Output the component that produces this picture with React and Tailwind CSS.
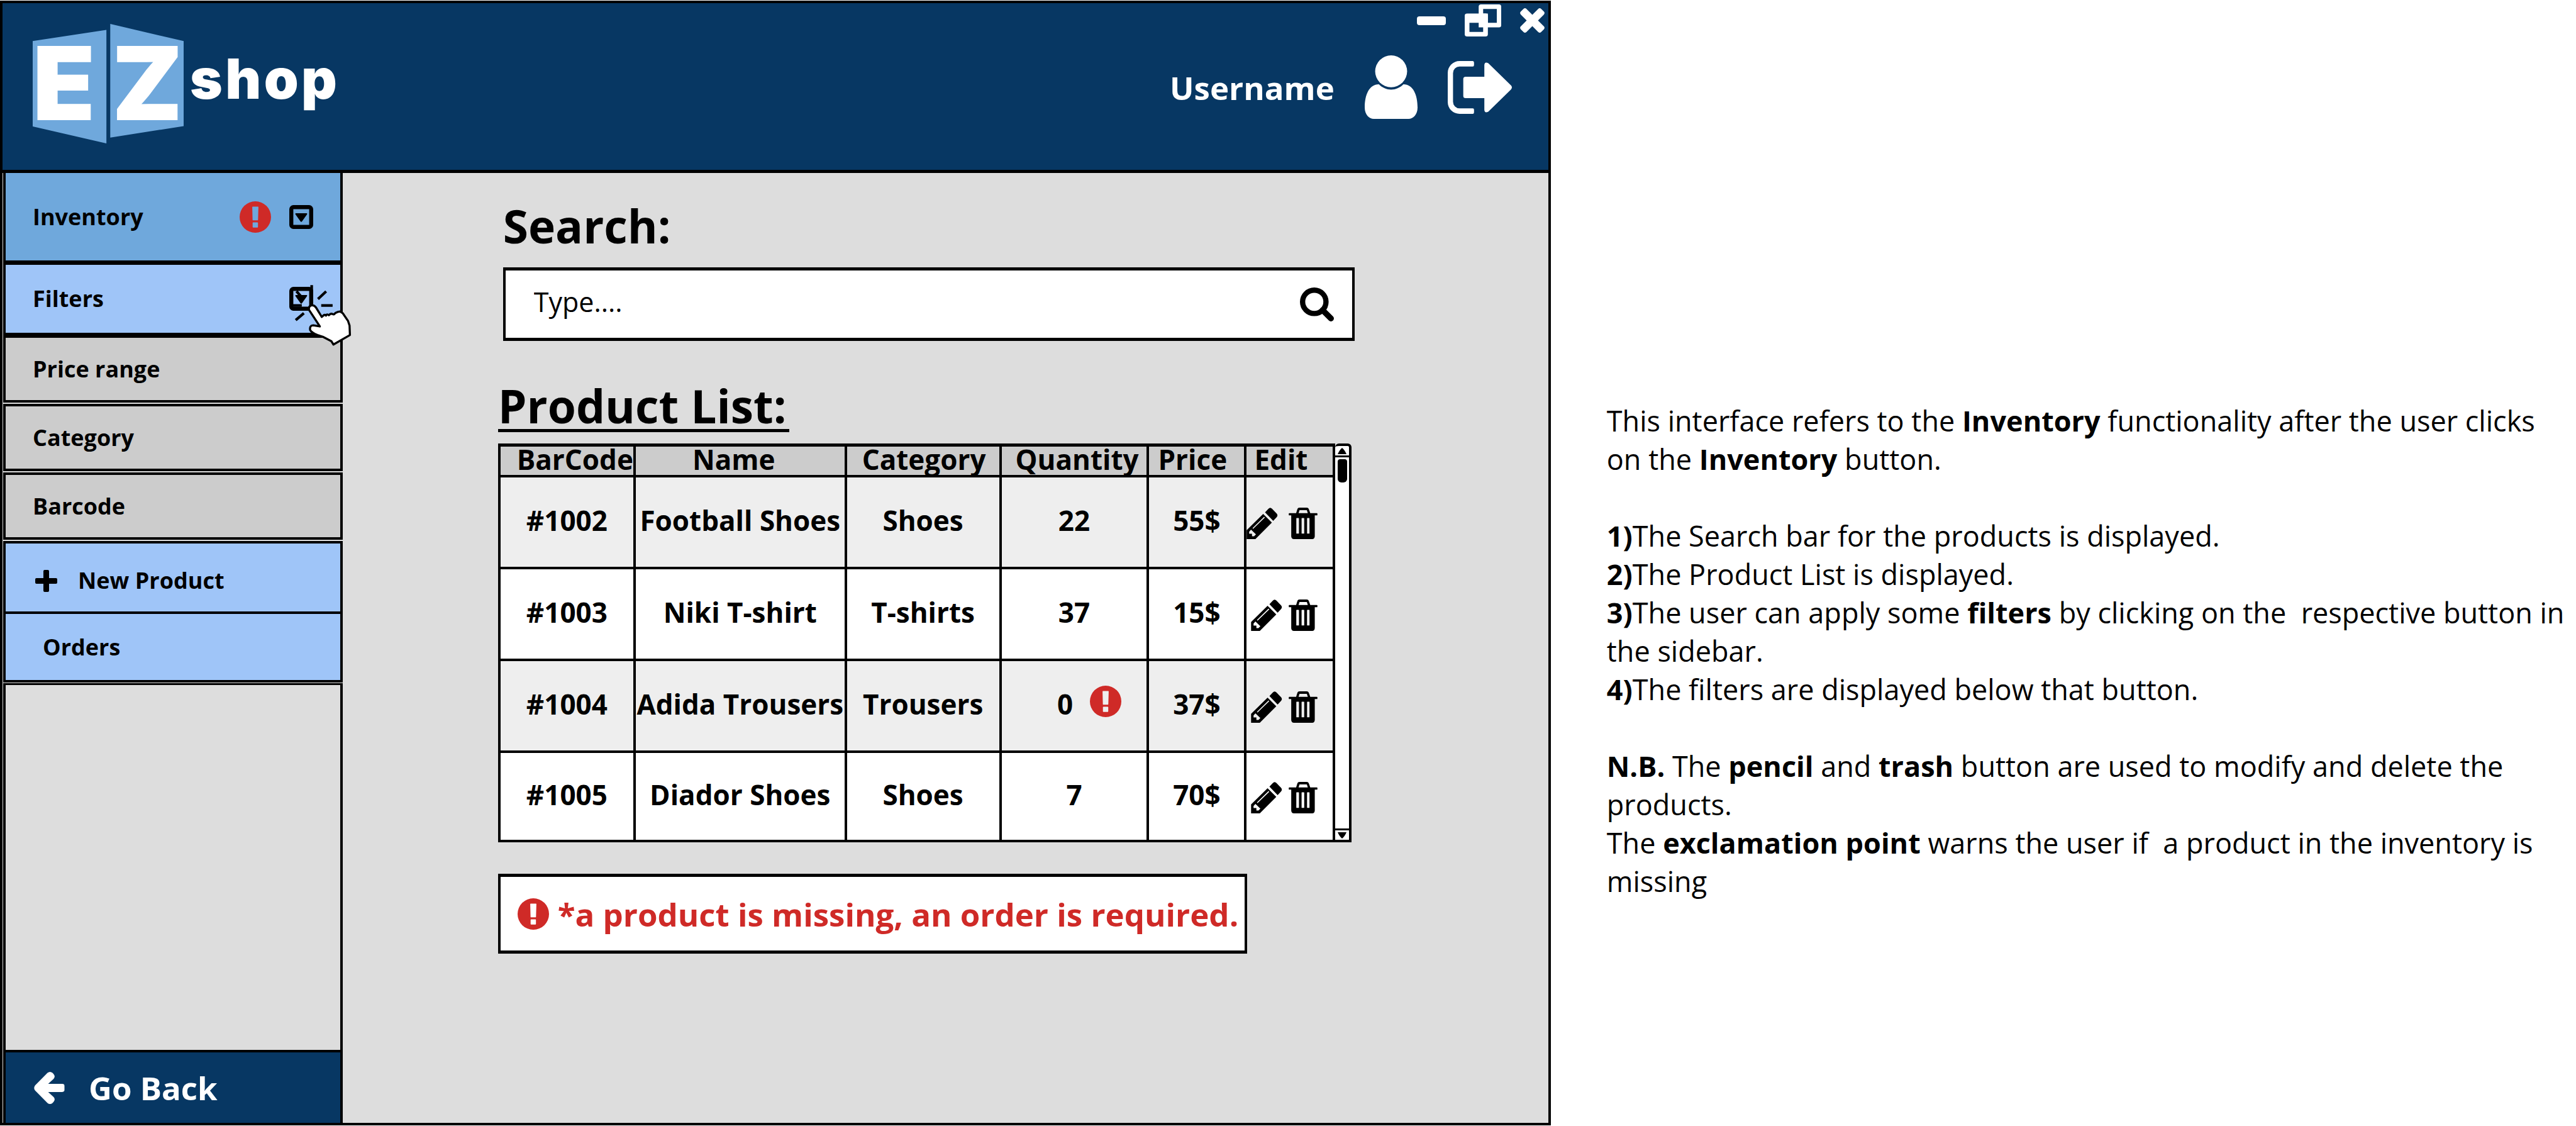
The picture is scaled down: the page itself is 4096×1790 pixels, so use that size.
import React from "react";

const products = [
  { code: "#1002", name: "Football Shoes", category: "Shoes", quantity: 22, price: "55$", missing: false },
  { code: "#1003", name: "Niki T-shirt", category: "T-shirts", quantity: 37, price: "15$", missing: false },
  { code: "#1004", name: "Adida Trousers", category: "Trousers", quantity: 0, price: "37$", missing: true },
  { code: "#1005", name: "Diador Shoes", category: "Shoes", quantity: 7, price: "70$", missing: false },
];

function AlertIcon() {
  return (
    <svg viewBox="0 0 50 50" className="size-[50px] shrink-0 text-[#cf2a27]" fill="currentColor" role="img" aria-label="Missing product">
      <path
        fillRule="evenodd"
        d="M25 0A25 25 0 1 1 25 50A25 25 0 1 1 25 0ZM20.8 8.4Q20.1 8.4 20.1 9.3L20.6 29.4Q20.6 30.3 21.6 30.3H28.3Q29.3 30.3 29.3 29.4L29.9 9.3Q29.9 8.4 29.2 8.4ZM21.6 33.4Q20.7 33.4 20.7 34.3V40.8Q20.7 41.7 21.6 41.7H28.3Q29.2 41.7 29.2 40.8V34.3Q29.2 33.4 28.3 33.4Z"
      />
    </svg>
  );
}

function CaretBox() {
  return (
    <svg viewBox="0 0 38 38" className="size-[38px] shrink-0" aria-hidden="true">
      <rect x="3.2" y="3.2" width="31.6" height="31.6" rx="3.4" fill="none" stroke="black" strokeWidth="6.4" />
      <path d="M10.4 13H27.6Q29 13.2 28.2 14.8L20.2 26Q19 27.4 17.8 26L9.8 14.8Q9 13.2 10.4 13Z" fill="black" />
    </svg>
  );
}

function PencilIcon() {
  return (
    <svg viewBox="39 44 164 166" className="size-[50px]" fill="black" aria-hidden="true">
      <path d="M136 69L154 50Q163 40 173 50L197 75Q206 85 197 95L179 114Z" />
      <path
        fillRule="evenodd"
        d="M126 77L172 123L85 210H39V163ZM131 92L70 152L73 156L135 96ZM62 160L52 171V182H67V195H78L88 185Z"
      />
    </svg>
  );
}

function TrashIcon() {
  return (
    <svg viewBox="261 43 152 167" className="h-[50px] w-[46px]" fill="black" aria-hidden="true">
      <path
        fillRule="evenodd"
        d="M264 72H300L307 50Q309 43 318 43H356Q365 43 367 50L375 72H410Q413 72 413 75V81Q413 84 410 84H399V194Q399 210 385 210H289Q274 210 274 194V84H264Q261 84 261 81V75Q261 72 264 72ZM313 72H362L357 56H318ZM303 98Q301 98 301 100V179Q301 181 303 181H313Q315 181 315 179V100Q315 98 313 98ZM331 98Q329 98 329 100V179Q329 181 331 181H341Q343 181 343 179V100Q343 98 341 98ZM360 98Q358 98 358 100V179Q358 181 360 181H369Q371 181 371 179V100Q371 98 369 98Z"
      />
    </svg>
  );
}

function Logo() {
  return (
    <svg viewBox="0 0 500 192" className="h-[192px] w-[500px] shrink-0" role="img" aria-label="EZ shop">
      <polygon points="0,27.3 117.2,9.4 117.2,190 0,163" fill="#6fa8dc" />
      <polygon points="123.3,0 240,27.3 240,162.5 123.3,180.7" fill="#6fa8dc" />
      <g className="font-['Inter',sans-serif] font-black" fill="white">
        <text x="0" y="152.5" fontSize="162">E</text>
        <text x="126" y="152.5" fontSize="162">Z</text>
        <text x="250" y="119.4" fontSize="88" className="tracking-wider">shop</text>
      </g>
    </svg>
  );
}

function WindowControls() {
  return (
    <div className="flex items-center gap-[30px]">
      <button type="button" aria-label="Minimize">
        <svg viewBox="0 0 46 14" className="h-[14px] w-[46px]"><rect width="46" height="14" rx="4" fill="white" /></svg>
      </button>
      <button type="button" aria-label="Restore">
        <svg viewBox="0 0 58 51" className="h-[51px] w-[58px]" fill="white">
          <path fillRule="evenodd" d="M26 0H54.5Q58 0 58 3.5V33Q58 36.5 54.5 36.5H22.2V3.5Q22.2 0 26 0ZM29.3 7.3V14.6H36.8V29.2H51V7.3Z" />
          <path fillRule="evenodd" d="M4 14.6H33Q36.8 14.6 36.8 18V47.5Q36.8 51 33 51H4Q0 51 0 47.5V18Q0 14.6 4 14.6ZM7.5 29.2V43.7H29.3V29.2Z" />
        </svg>
      </button>
      <button type="button" aria-label="Close">
        <svg viewBox="0 0 39 39" className="size-[39px]" fill="white">
          <path d="M5.6 1Q7.8-.8 10 1L19.5 10.6L29 1Q31.2-.8 33.4 1L38 5.6Q39.8 7.8 38 10L28.5 19.5L38 29Q39.8 31.2 38 33.4L33.4 38Q31.2 39.8 29 38L19.5 28.4L10 38Q7.8 39.8 5.6 38L1 33.4Q-.8 31.2 1 29L10.5 19.5L1 10Q-.8 7.8 1 5.6Z" />
        </svg>
      </button>
    </div>
  );
}

function Header() {
  return (
    <header className="flex h-[270px] shrink-0 items-start justify-between border-b-[5px] border-black bg-[#073763] text-white">
      <div className="pt-[33px] pl-12"><Logo /></div>
      <div className="flex flex-col items-end pt-[2px] pr-[6px]">
        <WindowControls />
        <div className="mt-[30px] flex items-center gap-12 pr-[52px]">
          <span className="text-[51px] leading-[60px] font-bold">Username</span>
          <svg viewBox="0 0 84 101" className="h-[101px] w-[84px]" fill="white" role="img" aria-label="User">
            <circle cx="42" cy="25.4" r="25.4" />
            <path d="M22.5 46C7 46 0 63 0 83C0 94 7 101 14.5 101H69.5C77 101 84 94 84 83C84 63 77 46 61.5 46C56 51.5 49 54.5 42 54.5C35 54.5 28 51.5 22.5 46Z" />
          </svg>
          <button type="button" aria-label="Log out">
            <svg viewBox="0 0 102 84" className="h-[84px] w-[102px]" fill="white">
              <path d="M39.8 0Q41.8 0 41.8 2.5V6.3Q41.8 8.8 39.8 8.8H18.8A10.4 10.4 0 0 0 8.4 19.2V64.8A10.4 10.4 0 0 0 18.8 75.2H39.8Q41.8 75.2 41.8 77.5V81.5Q41.8 84 39.8 84H18.8A18.8 18.8 0 0 1 0 65.2V18.8A18.8 18.8 0 0 1 18.8 0Z" />
              <path d="M28.5 24.9H58.2V6.5Q58.6 .5 64.5 3.5L100.6 38.8Q103.4 42 100.6 45.2L64.5 80.4Q58.6 83.5 58.2 77.5V59H28.5Q24.7 59 24.7 55.5V28.5Q24.7 24.9 28.5 24.9Z" />
            </svg>
          </button>
        </div>
      </div>
    </header>
  );
}

function ClickPointer() {
  return (
    <svg viewBox="0 0 390 360" className="pointer-events-none absolute top-[25px] -right-[26px] z-10 h-[109px] w-[118px]" aria-hidden="true">
      <g stroke="black" strokeWidth="14" fill="none">
        <path d="M154 24V80M74 56L106 92M187 97L230 57M43 131H102M204 131H264M70 208L113 171" />
      </g>
      <path
        d="M140 154Q136 134 154 130Q168 128 177 142L207 191L215 184Q222 176 229 184Q234 173 244 182Q254 170 264 176Q272 181 279 170Q291 163 303 162L317 171L345 212L353 236L355 286L268 336L258 319L212 295L184 286Q152 272 146 260Q142 236 162 235L197 241Z"
        fill="white"
        stroke="black"
        strokeWidth="11"
        strokeLinejoin="round"
      />
    </svg>
  );
}

function Sidebar() {
  const row = "flex w-full items-center border-x-4 border-black pr-[43px] pl-[43px] text-left";
  const filter = "flex h-[107px] w-full items-center border-4 border-black bg-[#cccccc] pl-[43px] text-left";
  return (
    <nav className="flex w-[22%] shrink-0 flex-col pl-px text-[36px] leading-[50px] font-bold">
      <button type="button" className={row + " h-[146px] justify-between border-b-[7px] bg-[#6fa8dc]"}>
        <span>Inventory</span>
        <span className="flex items-center gap-[29px]"><AlertIcon /><CaretBox /></span>
      </button>
      <button type="button" className={row + " relative h-[112px] justify-between border-b-4 bg-[#9fc5f8]"}>
        <span>Filters</span>
        <CaretBox />
        <ClickPointer />
      </button>
      <div className="flex flex-col gap-[2px] pb-[2px]">
        <button type="button" className={filter}>Price range</button>
        <button type="button" className={filter}>Category</button>
        <button type="button" className={filter}>Barcode</button>
      </div>
      <button type="button" className={row + " h-[116px] gap-[32px] border-y-4 bg-[#9fc5f8] pt-[10px]"}>
        <svg viewBox="-2 0 40 35" className="h-[35px] w-10" aria-hidden="true">
          <path d="M15 0H20Q22 0 22 2V13H33Q35 13 35 15V20Q35 22 33 22H22V33Q22 35 20 35H15Q13 35 13 33V22H2Q0 22 0 20V15Q0 13 2 13H13V2Q13 0 15 0Z" transform="translate(2 0)" />
        </svg>
        New Product
      </button>
      <button type="button" className={row + " h-[109px] border-b-4 bg-[#9fc5f8]"}>
        <span className="pl-4">Orders</span>
      </button>
      <div className="mt-px min-h-20 flex-1 border-x-4 border-t-[3px] border-black" />
      <button type="button" className="flex h-[116px] items-center gap-[38px] border-x-4 border-t-4 border-black bg-[#073763] pl-[45px] text-[51px] text-white">
        <svg viewBox="0 0 49 51" className="h-[51px] w-[49px]" fill="white" aria-hidden="true">
          <path d="M2 21.3L21.5 1.6Q25.5-1.5 29.5 1.6L31.3 3.6Q34.5 7.4 31.3 11L22.6 19.1H45Q48.5 19.1 48.5 22.4V28.6Q48.5 31.9 45 31.9H22.6L31.3 40Q34.5 43.6 31.3 47.4L29.5 49.4Q25.5 52.5 21.5 49.4L2 29.7Q-1.5 25.5 2 21.3Z" />
        </svg>
        Go Back
      </button>
    </nav>
  );
}

function ProductTable() {
  const th = "border-r-4 border-b-4 border-black pb-[6px] text-left leading-[38px] font-bold";
  const td = "border-r-4 border-b-4 border-black pb-[6px] text-center";
  return (
    <div className="mt-[18px] flex w-[81.3%]">
      <table className="min-w-0 flex-1 table-fixed border-separate border-spacing-0 border-t-[5px] border-l-4 border-black text-[44px] leading-[60px] font-bold">
        <colgroup>
          <col className="w-[15.2%]" />
          <col className="w-[26.2%]" />
          <col className="w-[18.7%]" />
          <col className="w-[17.8%]" />
          <col className="w-[11.9%]" />
          <col className="w-[10.2%]" />
        </colgroup>
        <thead>
          <tr className="h-[49px] bg-[#cccccc]">
            <th className={th + " pl-[26px]"}>BarCode</th>
            <th className={th + " pl-[90px]"}>Name</th>
            <th className={th + " pl-[24px]"}>Category</th>
            <th className={th + " pl-[22px]"}>Quantity</th>
            <th className={th + " pl-[14px]"}>Price</th>
            <th className={th + " pl-[12px]"}>Edit</th>
          </tr>
        </thead>
        <tbody>
          {products.map((p, i) => (
            <tr key={p.code} className="h-[146px] bg-white odd:bg-[#eeeeee] last:h-[142px]">
              <td className={td}>{p.code}</td>
              <td className={td}>{p.name}</td>
              <td className={td}>{p.category}</td>
              <td className={td}>
                {p.missing ? (
                  <span className="flex items-center justify-center gap-[27px] pl-12">
                    {p.quantity}
                    <span className="pb-2"><AlertIcon /></span>
                  </span>
                ) : (
                  p.quantity
                )}
              </td>
              <td className={td}>{p.price}</td>
              <td className="border-r-4 border-b-4 border-black pt-1">
                <span className={i === 0 ? "flex justify-end gap-[17px] pr-6" : "flex justify-end gap-[10px] pr-6"}>
                  <button type="button" aria-label={"Edit " + p.name}><PencilIcon /></button>
                  <button type="button" aria-label={"Delete " + p.name}><TrashIcon /></button>
                </span>
              </td>
            </tr>
          ))}
        </tbody>
      </table>
      <div className="flex w-[26px] shrink-0 flex-col rounded-t-md border-t-4 border-r-4 border-b-4 border-black bg-white">
        <button type="button" aria-label="Scroll up" className="flex h-[18px] items-center justify-center border-b-[3px] border-black">
          <svg viewBox="0 0 14 10" className="h-[10px] w-[14px]"><path d="M0 10Q3 3 7 0Q11 3 14 10Z" /></svg>
        </button>
        <div className="flex flex-1 justify-center pt-[3px]">
          <div className="h-[37px] w-[15px] rounded-b-md rounded-t-sm bg-black" />
        </div>
        <button type="button" aria-label="Scroll down" className="flex h-[18px] items-center justify-center border-t-[3px] border-black">
          <svg viewBox="0 0 14 10" className="h-[10px] w-[14px]"><path d="M0 0Q3 7 7 10Q11 7 14 0Z" /></svg>
        </button>
      </div>
    </div>
  );
}

function Notes() {
  return (
    <aside className="min-w-0 flex-1 pt-[637px] pl-[89px] text-[45px] leading-[61px] whitespace-pre-wrap">
      <p>This interface refers to the <b>Inventory</b> functionality after the user clicks on the <b>Inventory</b> button.</p>
      <div className="pt-[61px]">
        <p><b>1)</b>The Search bar for the products is displayed.</p>
        <p><b>2)</b>The Product List is displayed.</p>
        <p><b>3)</b>The user can apply some <b>filters</b> by clicking on the{"  "}respective button in the sidebar.</p>
        <p><b>4)</b>The filters are displayed below that button.</p>
      </div>
      <div className="pt-[61px]">
        <p><b>N.B.</b> The <b>pencil</b> and <b>trash</b> button are used to modify and delete the products.</p>
        <p>The <b>exclamation point</b> warns the user if{"  "}a product in the inventory is missing</p>
      </div>
    </aside>
  );
}

export default function App() {
  return (
    <div className="flex min-h-screen bg-white py-px font-['Open_Sans',sans-serif] text-black">
      <div className="flex w-[60.2%] shrink-0 flex-col border-4 border-black bg-[#dddddd]">
        <Header />
        <div className="flex flex-1">
          <Sidebar />
          <main className="min-w-0 flex-1 pt-[44px] pl-[247px]">
            <div className="pl-2">
              <label htmlFor="search" className="block text-[73px] leading-[80px] font-bold">Search:</label>
              <div className="mt-[26px] flex h-[117px] w-[81.5%] items-center border-x-4 border-y-[5px] border-black bg-white pr-[29px] pl-[45px]">
                <input
                  id="search"
                  type="text"
                  placeholder="Type...."
                  className="min-w-0 flex-1 bg-transparent pb-2 text-[43px] leading-[60px] outline-none placeholder:text-black placeholder:opacity-100"
                />
                <button type="button" aria-label="Search">
                  <svg viewBox="0 0 54 54" className="size-[54px]" fill="none" stroke="black" aria-hidden="true">
                    <circle cx="22.8" cy="22.8" r="18.6" strokeWidth="8.4" />
                    <path d="M36 36L49.3 49.3" strokeWidth="9.4" strokeLinecap="round" />
                  </svg>
                </button>
              </div>
            </div>
            <h2 className="mt-[65px] w-fit border-b-[5px] border-black pr-1 text-[73px] leading-[75px] font-bold">Product List:</h2>
            <ProductTable />
            <div className="mt-[50px] flex h-[127px] w-fit items-center gap-[14px] border-x-4 border-y-[5px] border-black bg-white pr-[10px] pl-[27px] text-[51px] leading-[70px] font-bold whitespace-nowrap text-[#cf2a27]">
              <AlertIcon />
              <p>*a product is missing, an order is required.</p>
            </div>
          </main>
        </div>
      </div>
      <Notes />
    </div>
  );
}
